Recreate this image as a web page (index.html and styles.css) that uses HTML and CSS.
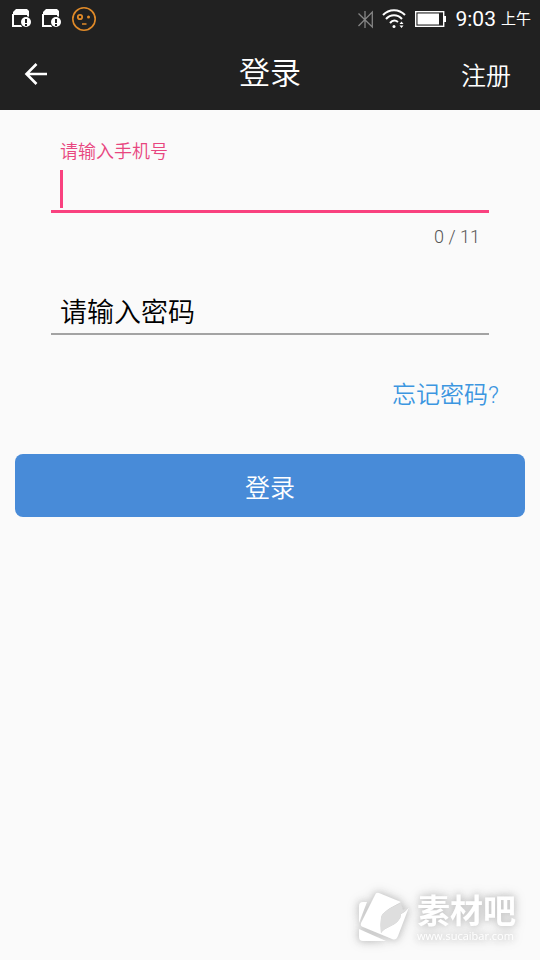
FILE: index.html
```html
<!DOCTYPE html>
<html lang="zh-CN">
<head>
<meta charset="utf-8">
<meta name="viewport" content="width=device-width, initial-scale=1">
<title>登录</title>
<link rel="stylesheet" href="styles.css">
</head>
<body>
<div class="status">
  <svg width="20" height="20" viewBox="0 0 20 20" aria-hidden="true">
    <path d="M4 0H15L17 2V6H1V3Z" fill="#fff"/>
    <path d="M1 5V17H10" fill="none" stroke="#fff" stroke-width="2"/>
    <path d="M16 5V9" fill="none" stroke="#fff" stroke-width="2"/>
    <circle cx="14" cy="13" r="6" fill="#212121"/>
    <circle cx="14" cy="13" r="5" fill="#fff"/>
    <path d="M14 10V14M14 15V17" stroke="#212121" stroke-width="2"/>
  </svg>
  <svg width="20" height="20" viewBox="0 0 20 20" aria-hidden="true">
    <path d="M4 0H15L17 2V6H1V3Z" fill="#fff"/>
    <path d="M1 5V17H10" fill="none" stroke="#fff" stroke-width="2"/>
    <path d="M16 5V9" fill="none" stroke="#fff" stroke-width="2"/>
    <circle cx="14" cy="13" r="6" fill="#212121"/>
    <circle cx="14" cy="13" r="5" fill="#fff"/>
    <path d="M14 10V14M14 15V17" stroke="#212121" stroke-width="2"/>
  </svg>
  <svg width="24" height="26" viewBox="1 0 24 26" fill="none" stroke="#e08a28" aria-hidden="true">
    <circle cx="13" cy="13" r="11.2" stroke-width="1.6"/>
    <circle cx="9" cy="11" r="2.2" stroke-width="1.8"/>
    <circle cx="17.500" cy="11" r="1.500" fill="#e08a28" stroke="none"/>
    <path d="M11 18H15.500" stroke-width="1.500"/>
  </svg>
  <div class="status-end">
    <svg width="16" height="20" viewBox="0 0 16 20" fill="none" stroke="#858585" stroke-width="1.300" aria-hidden="true">
      <path d="M1.500 4.500L15.300 18V3L1.500 17M8 2V19"/>
    </svg>
    <svg width="24" height="20" viewBox="0 0 24 20" fill="none" stroke="#fff" stroke-width="2" aria-hidden="true">
      <path d="M1 6C7-.5 17-.5 23 6M4 10C8.500 5 15.500 5 20 10M8 14C10.500 11 13.500 11 16 13"/>
      <circle cx="12" cy="17.500" r="1.500" fill="#fff" stroke="none"/>
      <path d="M17.500 15L19.500 12.500L21.500 15ZM17.500 16.500L19.500 19L21.500 16.500Z" fill="#fff" stroke="none"/>
    </svg>
    <svg width="31" height="16" viewBox="0 0 31 16" aria-hidden="true">
      <rect x=".7" y=".7" width="28" height="14.600" fill="none" stroke="#fff" stroke-width="1.400"/>
      <path d="M2.500 2.500H24V13.500H2.500ZM29 5H31V11H29Z" fill="#fff"/>
    </svg>
    <span class="time">9:03</span><span class="period">上午</span>
  </div>
</div>
<header class="bar">
  <button class="back" type="button" aria-label="返回">
    <svg width="24" height="24" viewBox="0 0 24 24" fill="none" stroke="#fff" stroke-width="2.600" aria-hidden="true">
      <path d="M12.500 2L2.500 12L12.500 22M2.500 12H23"/>
    </svg>
  </button>
  <h1 class="title">登录</h1>
  <a class="register" href="#register">注册</a>
</header>
<main class="content">
  <form class="form">
    <div class="fields">
      <label class="label" for="phone">请输入手机号</label>
      <div class="field active">
        <span class="caret"></span>
        <input class="input" id="phone" type="tel" maxlength="11">
      </div>
      <div class="counter">0 / 11</div>
      <div class="field">
        <input class="input" id="password" type="password" placeholder="请输入密码" aria-label="请输入密码">
      </div>
    </div>
    <a class="forgot" href="#forgot">忘记密码?</a>
    <button class="submit" type="submit">登录</button>
  </form>
</main>
<footer class="mark">
  <svg width="52" height="52" viewBox="0 0 52 52" aria-hidden="true">
    <path d="M8 12H4Q0 12 0 16V33L8 12ZM0 39L27 51H4Q0 51 0 47Z" fill="#fff"/>
    <path d="M16 5Q17 2 20 3L42 12C31 18 23 22 22 28Q21 35 22 43C26 37 35 36 39 31Q42 28 42 24Q47 22 50 17L39 46Q37 51 33 49L4 37Q1 36 2 33Z" fill="#fff"/>
    <path d="M42 13C31 18 23 22 22 28Q21 35 22 43C26 37 35 36 39 31Q42 28 42 24Q46 22 50 17L44 20Z" fill="#dedede"/>
  </svg>
  <div class="mark-text">
    <span class="mark-name">素材吧</span>
    <span class="mark-url">www.sucaibar.com</span>
  </div>
</footer>
</body>
</html>
```
FILE: styles.css
```css
* {
  box-sizing: border-box;
}

body {
  margin: 0;
  min-height: 100vh;
  display: flex;
  flex-direction: column;
  background: #fafafa;
  color: #000;
  font-family: Roboto, "Noto Sans CJK SC", sans-serif;
  font-weight: 350;
}

a {
  text-decoration: none;
}

button {
  border: 0;
  padding: 0;
  font: inherit;
  cursor: pointer;
}

.status {
  display: flex;
  align-items: center;
  gap: 10px;
  height: 38px;
  padding: 0 9px 0 12px;
  background: #212121;
  color: #fff;
  font-weight: 400;
}

.status-end {
  display: flex;
  align-items: center;
  gap: 9px;
  margin-left: auto;
}

.time {
  font-size: 21px;
  line-height: 38px;
}

.period {
  margin-left: -4px;
  font-size: 15px;
  line-height: 38px;
}

.bar {
  display: grid;
  grid-template-columns: 1fr auto 1fr;
  align-items: center;
  height: 72px;
  padding: 0 24px;
  background: #212121;
  color: #fff;
}

.back {
  justify-self: start;
  display: flex;
  background: none;
}

.title {
  margin: 0;
  font-size: 31px;
  line-height: 72px;
  font-weight: inherit;
}

.register {
  justify-self: end;
  padding-right: 5px;
  color: #fff;
  font-size: 25px;
}

.content {
  padding: 28px 15px;
}

.form {
  display: flex;
  flex-direction: column;
}

.fields {
  display: flex;
  flex-direction: column;
  padding: 0 36px;
}

.label {
  padding: 0 9px;
  color: #e8467f;
  font-size: 18px;
  line-height: 27px;
}

.field {
  display: flex;
  align-items: flex-end;
  height: 48px;
  padding: 0 9px;
  border-bottom: 2px solid #a3a3a3;
}

.field.active {
  padding-bottom: 2px;
  border-bottom: 3px solid #f9417f;
}

.caret {
  width: 3px;
  height: 38px;
  background: #f9417f;
}

.input {
  flex: 1;
  min-width: 0;
  padding: 0;
  border: 0;
  outline: 0;
  background: none;
  color: #000;
  font: inherit;
  font-size: 27px;
  line-height: 40px;
}

.input::placeholder {
  color: #000;
  opacity: 1;
}

.counter {
  margin-bottom: 26px;
  padding: 0 9px;
  color: #555;
  font-size: 18px;
  line-height: 48px;
  text-align: right;
}

.forgot {
  align-self: flex-end;
  margin: 42px 26px 41px;
  color: #3c96e0;
  font-size: 24px;
  line-height: 36px;
}

.submit {
  height: 63px;
  border-radius: 8px;
  background: #488bd8;
  color: #fff;
  font-size: 25px;
}

.mark {
  display: flex;
  align-items: center;
  gap: 6px;
  margin-top: auto;
  margin-left: auto;
  padding: 0 24px 18px 0;
  color: #fff;
  filter: drop-shadow(0 0 3px #c8c8c8) drop-shadow(0 0 5px #d0d0d0);
}

.mark-text {
  display: flex;
  flex-direction: column;
  padding-top: 4px;
}

.mark-name {
  font-size: 33px;
  font-weight: 700;
  line-height: 36px;
}

.mark-url {
  font-family: "Open Sans", sans-serif;
  font-size: 11px;
  font-weight: 400;
  line-height: 12px;
}
```
